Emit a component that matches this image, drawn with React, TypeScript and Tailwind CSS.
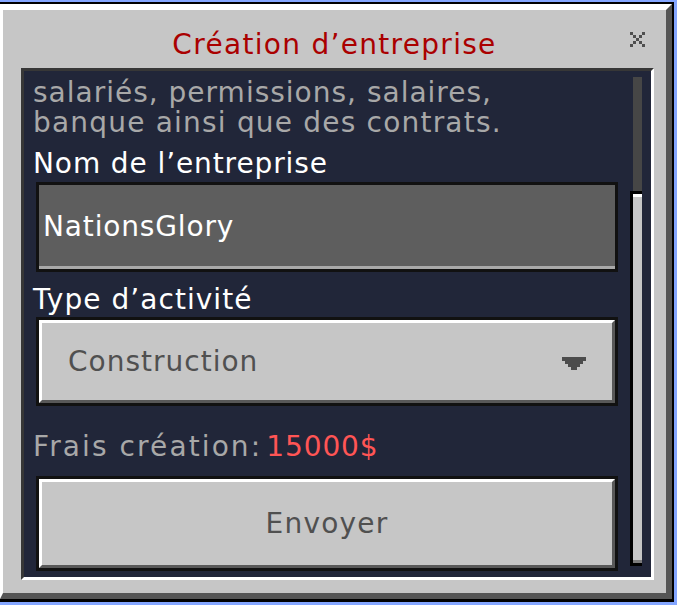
import React from "react";

function CloseIcon() {
  const px = [
    [0, 0], [4, 0], [1, 1], [3, 1], [2, 2], [1, 3], [3, 3], [0, 4], [4, 4],
  ];
  return (
    <svg width="15" height="15" viewBox="0 0 15 15" shapeRendering="crispEdges">
      {px.map(([x, y], i) => (
        <rect key={i} x={x * 3} y={y * 3} width="3" height="3" fill="#4e4e4e" />
      ))}
    </svg>
  );
}

function ArrowDown() {
  return (
    <svg width="24" height="13" viewBox="0 0 24 13" shapeRendering="crispEdges" fill="#4c4c4c" className="mt-[4px]">
      <rect x="0" y="0" width="24" height="4" />
      <rect x="3" y="4" width="18" height="3" />
      <rect x="6" y="7" width="12" height="3" />
      <rect x="9" y="10" width="6" height="3" />
    </svg>
  );
}

// bouton gris façon Minecraft : contour noir, reflet blanc en haut/gauche, ombre en bas/droite
function McButton({ children, className = "" }: { children: React.ReactNode; className?: string }) {
  return (
    <div className={"ml-[12px] w-[582px] border-[3px] border-[#111111] " + className}>
      <div className="flex h-full items-center border-[3px] border-t-white border-l-white border-r-[#585858] border-b-[#585858] bg-[#c6c6c6]">
        {children}
      </div>
    </div>
  );
}

export default function App() {
  return (
    <div className="h-[605px] w-[677px] bg-[#84a6ff] pt-[2px] pr-[3px] pb-[3px] font-['DejaVu_Sans',sans-serif] text-[28px] leading-[30px]">
      <div className="h-full border-t-2 border-r-2 border-b-[3px] border-black">
        <div className="flex h-full flex-col border-t-[6px] border-l-[3px] border-r-[6px] border-b-[6px] border-t-white border-l-white border-r-[#555555] border-b-[#555555] bg-[#c6c6c6]">
          {/* en-tête */}
          <div className="relative flex h-[58px] shrink-0 justify-center pt-[20px]">
            <span className="tracking-[1.3px] text-[#aa0000]">Création d’entreprise</span>
            <button className="absolute left-[627px] top-[22px] h-[15px] w-[15px]">
              <CloseIcon />
            </button>
          </div>

          {/* panneau défilant */}
          <div className="ml-[18px] flex h-[512px] w-[633px] overflow-hidden border-[3px] border-t-[#373737] border-l-[#373737] border-r-white border-b-white bg-[#212639]">
            <div className="w-[606px] shrink-0 pt-[7px]">
              <div className="pl-[9px] text-[#a8a8a8]">
                <div className="whitespace-nowrap tracking-[1px]">salariés, permissions, salaires,</div>
                <div className="whitespace-nowrap tracking-[1.2px]">banque ainsi que des contrats.</div>
              </div>

              <div className="mt-[11px] pl-[9px] tracking-[0.9px] text-white">Nom de l’entreprise</div>
              <div className="ml-[12px] mt-[3px] h-[90px] w-[582px] border-[3px] border-[#111111]">
                <div className="flex h-full items-center border-b-[3px] border-b-[#a9a9a9] bg-[#5e5e5e] pl-[4px] pt-[2px] tracking-[0.85px] text-white">
                  NationsGlory
                </div>
              </div>

              <div className="mt-[13px] pl-[9px] tracking-[1.05px] text-white">Type d’activité</div>
              <McButton className="mt-[2px] h-[89px]">
                <div className="flex w-full items-center justify-between pl-[26px] pr-[26px]">
                  <span className="tracking-[1px] text-[#505050]">Construction</span>
                  <ArrowDown />
                </div>
              </McButton>

              <div className="mt-[26px] flex gap-[4px] pl-[9px]">
                <span className="tracking-[2.1px] text-[#a8a8a8]">Frais création:</span>
                <span className="tracking-[0.9px] text-[#ff5555]">15000$</span>
              </div>

              <McButton className="mt-[14px] h-[95px]">
                <span className="w-full text-center tracking-[1.2px] text-[#505050]">Envoyer</span>
              </McButton>
            </div>

            {/* barre de défilement */}
            <div className="w-[12px] shrink-0 pt-[6px]">
              <div className="ml-[3px] h-[114px] w-[9px] bg-[#464646]" />
              <div className="h-[375px] w-[12px] border-t-[3px] border-l-[3px] border-b-[3px] border-black">
                <div className="h-full border-t-[3px] border-b-[3px] border-t-white border-b-[#7c7c7c] bg-[#c6c6c6]" />
              </div>
            </div>
          </div>
        </div>
      </div>
    </div>
  );
}
